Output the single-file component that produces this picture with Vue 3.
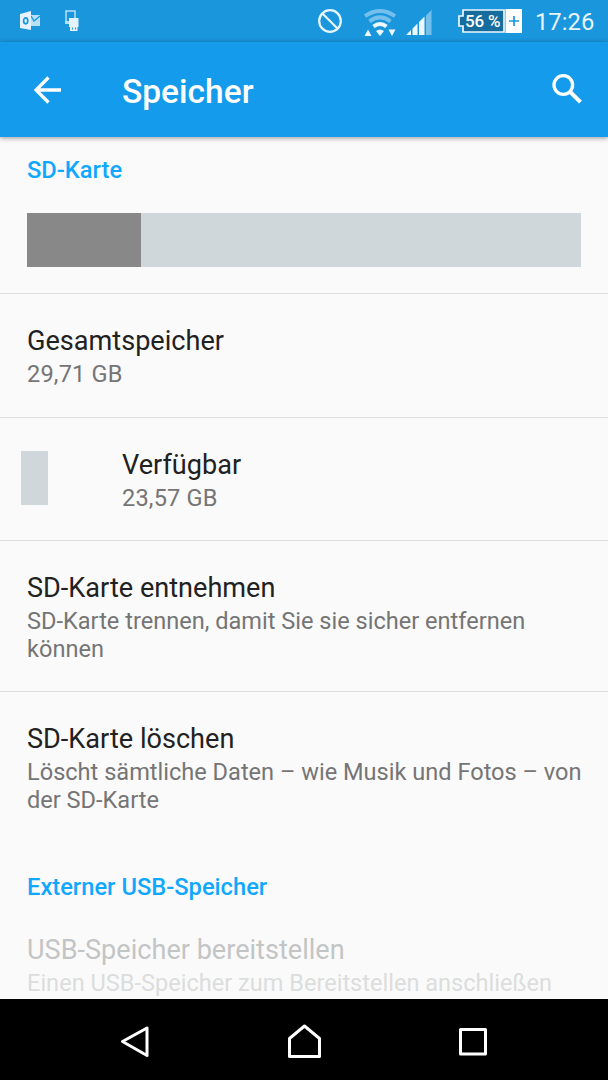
<template>
  <div class="screen">
    <div class="status">
      <svg class="outlook" viewBox="0 0 22 20" width="22" height="20">
        <path d="M11 4h9v11h-9z" fill="#b9dff7" />
        <path d="M11 5l3 5 6-5" fill="none" stroke="#1a96dd" stroke-width="1.3" />
        <path d="M0 3L11 0v19L0 17z" fill="#e4f3fd" />
        <ellipse cx="5.7" cy="9.8" rx="2.1" ry="3" fill="none" stroke="#1a96dd" stroke-width="1.7" />
      </svg>
      <svg class="usb" viewBox="0 0 14 22" width="14" height="22">
        <path d="M3 13H1V1h9v7" fill="none" stroke="#b9dff7" stroke-width="1.5" />
        <path d="M0 11h4v3H0z" fill="#b9dff7" />
        <path d="M4 8h9.500v9h-1v4h-7.500v-4H4z" fill="#e4f3fd" />
        <path d="M7.500 17.500v2M10.500 17.500v2" stroke="#1a96dd" />
      </svg>
      <svg class="blocked" viewBox="0 0 24 24" width="24" height="24">
        <circle cx="12" cy="12" r="10.800" fill="none" stroke="#e8f5fd" stroke-width="2.200" />
        <path d="M4.500 4.500l15 15" stroke="#e8f5fd" stroke-width="2.200" />
      </svg>
      <svg class="wifi" viewBox="0 0 34 28" width="34" height="28">
        <g fill="none" stroke="#74bfec" stroke-width="4">
          <path d="M2 7.200Q17-3.200 32 7.200" />
          <path d="M6.500 12.300Q17 4.500 27.500 12.300" />
        </g>
        <path d="M10.500 17.500Q17 12.500 23.500 17.500" fill="none" stroke="#edf8fe" stroke-width="4" />
        <path d="M13 22q4-3 8 0L17 27z M1.500 27l3.500-6.500 3.500 6.500z M25.500 20.500h7L29 27z" fill="#edf8fe" />
      </svg>
      <svg class="signal" viewBox="0 0 26 25" width="26" height="25">
        <path d="M20 5.500L25.500 0v25H20z" fill="#74bfec" />
        <path d="M0 25l5-5v5z M6.500 18.500l5-5V25h-5z M13 12l5.500-5.500V25H13z" fill="#edf8fe" />
      </svg>
      <div class="battery">
        <svg viewBox="0 0 65 24" width="65" height="24">
          <path d="M5 1h41v22H5v-6H1V7h4z" fill="#176c9e" stroke="#edf8fe" stroke-width="1.700" />
          <path d="M47.500 0H64v24H47.500z" fill="#fff" />
          <path d="M56 7v10M51 12h10" stroke="#1a96dd" stroke-width="1.700" />
        </svg>
        <span class="percent">56 %</span>
      </div>
      <span class="time">17:26</span>
    </div>

    <header>
      <svg class="back" viewBox="0 0 28 28" width="28" height="28">
        <path d="M27 14H2.500M14.500 1.500L2 14l12.500 12.500" fill="none" stroke="#fff" stroke-width="3.300" />
      </svg>
      <h1>Speicher</h1>
      <svg class="search" viewBox="0 0 30 30" width="30" height="30">
        <circle cx="11.300" cy="11" r="9.300" fill="none" stroke="#fff" stroke-width="3.300" />
        <path d="M18.800 18.500l9.700 9.700" stroke="#fff" stroke-width="4" />
      </svg>
    </header>

    <main>
      <h2>SD-Karte</h2>
      <div class="usage">
        <div class="used" :style="{ width: usedPercent + '%' }"></div>
      </div>
      <section v-for="item in items" :key="item.title" class="item">
        <i v-if="item.swatch"></i>
        <div>
          <h3>{{ item.title }}</h3>
          <p :class="item.size && 'size'">{{ item.size || item.summary }}</p>
        </div>
      </section>
      <h2 class="external">Externer USB-Speicher</h2>
      <section class="item disabled">
        <div>
          <h3>USB-Speicher bereitstellen</h3>
          <p>Einen USB-Speicher zum Bereitstellen anschließen</p>
        </div>
      </section>
    </main>

    <nav>
      <svg viewBox="0 0 36 36" width="36" height="36">
        <path d="M5.500 18.500L30 5v27.500z" />
      </svg>
      <svg viewBox="0 0 36 36" width="36" height="36">
        <path d="M3.500 33.500V15.500L18.500 3l15 12.500v18z" />
      </svg>
      <svg viewBox="0 0 36 36" width="36" height="36">
        <path d="M5.500 6.500h25v24.500h-25z" />
      </svg>
    </nav>
  </div>
</template>

<script setup>
const usedPercent = 20.6;
const items = [
  { title: "Gesamtspeicher", size: "29,71 GB" },
  { title: "Verfügbar", size: "23,57 GB", swatch: true },
  {
    title: "SD-Karte entnehmen",
    summary: "SD-Karte trennen, damit Sie sie sicher entfernen können",
  },
  {
    title: "SD-Karte löschen",
    summary: "Löscht sämtliche Daten – wie Musik und Fotos – von der SD-Karte",
  },
];
</script>

<style>
body {
  margin: 0;
}
</style>

<style scoped>
.screen {
  width: 608px;
  height: 1080px;
  display: flex;
  flex-direction: column;
  overflow: hidden;
  background: #fafafa;
  font-family: Roboto, "Liberation Sans", sans-serif;
}
svg {
  display: block;
  flex: none;
}
h1,
h2,
h3,
p {
  margin: 0;
}
.status {
  box-sizing: border-box;
  height: 42px;
  flex: none;
  display: flex;
  align-items: flex-start;
  padding-left: 20px;
  background: #1a96dd;
}
.outlook {
  margin-top: 11px;
}
.usb {
  margin: 10px 0 0 23px;
}
.blocked {
  margin: 9px 0 0 239px;
}
.wifi {
  margin: 9px 0 0 21px;
}
.signal {
  margin: 10px 0 0 9px;
}
.battery {
  display: grid;
  margin: 9px 0 0 26px;
}
.battery > * {
  grid-area: 1 / 1;
}
.percent {
  padding-left: 7px;
  font-size: 17px;
  font-weight: 500;
  line-height: 24px;
  letter-spacing: -0.2px;
  color: #fff;
}
.time {
  margin-left: 12px;
  font-size: 23.8px;
  line-height: 44px;
  color: #e8f5fd;
}
header {
  box-sizing: border-box;
  position: relative;
  height: 95px;
  flex: none;
  display: flex;
  align-items: center;
  padding: 0 26px 0 34px;
  background: #159beb;
  box-shadow: 0 1px 5px rgba(0, 0, 0, 0.4);
}
.search {
  margin-bottom: 2px;
}
h1 {
  flex: 1;
  padding: 4px 0 0 60px;
  font-size: 33.5px;
  font-weight: 500;
  line-height: 40px;
  color: #fff;
}
main {
  flex: 1;
  min-height: 0;
  overflow: hidden;
}
h2 {
  padding: 19px 27px 0;
  font-size: 23.7px;
  font-weight: 500;
  line-height: 28px;
  color: #10a8fe;
}
h2.external {
  padding-top: 31px;
}
.usage {
  height: 54px;
  margin: 29px 27px 26px;
  background: #cfd7da;
}
.used {
  height: 100%;
  background: #888;
}
.item {
  display: flex;
  padding: 31px 20px 28px 27px;
  border-top: 1px solid #dfdfdf;
}
.usage + .item {
  padding-bottom: 29px;
}
.item h3 {
  font-size: 27.1px;
  font-weight: 400;
  line-height: 32px;
  color: #212121;
}
.item p {
  margin-top: 3px;
  font-size: 23.57px;
  line-height: 28px;
  color: #757575;
}
.item p.size {
  letter-spacing: 0.18px;
}
.item i {
  width: 27px;
  height: 54px;
  margin: 2px 74px 0 -6px;
  background: #cfd7da;
}
.item.disabled {
  padding-top: 33px;
  border: 0;
}
.item.disabled h3 {
  color: #c3c5c5;
}
.item.disabled p {
  color: #dcdddd;
}
nav {
  box-sizing: border-box;
  height: 81px;
  flex: none;
  display: flex;
  align-items: center;
  justify-content: center;
  gap: 133px;
  padding-top: 3px;
  background: #000;
}
nav path {
  fill: none;
  stroke: #fff;
  stroke-width: 3;
  stroke-linejoin: round;
}
</style>
